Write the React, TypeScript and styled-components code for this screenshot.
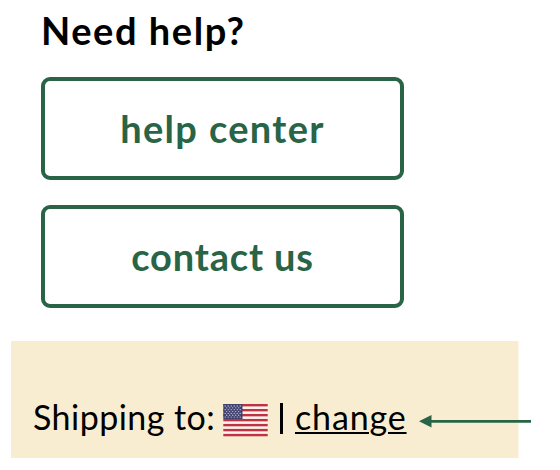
import React from "react";
import styled, { createGlobalStyle } from "styled-components";

const GREEN = "#2a6446";

const GlobalStyle = createGlobalStyle`
  * { box-sizing: border-box; }
  body { margin: 0; background: #fff; color: #000; font-family: Lato, "Liberation Sans", sans-serif; }
`;

const Page = styled.main`
  width: 560px;
  height: 470px;
  overflow: hidden;
`;

const HelpSection = styled.section`
  width: 404px;
  height: 341px;
  padding: 6px 0 0 41px;
  display: flex;
  flex-direction: column;
`;

const Heading = styled.h1`
  margin: 0 0 23px;
  height: 48px;
  font-size: 38px;
  line-height: 48px;
  font-weight: 700;
  letter-spacing: 1.55px;
  white-space: nowrap;
`;

const HelpButton = styled.button<{ $tracking: number }>`
  width: 363px;
  height: 103px;
  flex: none;
  margin: 0 0 25px;
  padding: 0 0 1px;
  border: 4px solid ${GREEN};
  border-radius: 9px;
  background: #fff;
  color: ${GREEN};
  font: 700 38px/48px Lato, "Liberation Sans", sans-serif;
  letter-spacing: ${(p) => p.$tracking}px;
`;

const ShippingBar = styled.section`
  width: 549px;
  height: 117px;
  margin-left: 11px;
  padding: 53px 0 0 22px;
  background: linear-gradient(#f8edd0, #f8edd0) 0 0 / 507.5px 100% no-repeat;
  display: flex;
  align-items: flex-start;
  font-size: 34px;
  line-height: 46px;
  white-space: nowrap;
`;

const Label = styled.span`
  width: 190px;
  letter-spacing: 0.45px;
`;

const Flag = styled.svg`
  width: 45px;
  height: 33px;
  margin-top: 10px;
  flex: none;
`;

const Separator = styled.span`
  width: 3px;
  height: 31px;
  margin: 9px 0 0 12px;
  background: #000;
`;

const ChangeLink = styled.a`
  width: 111px;
  margin-left: 12px;
  color: #000;
  letter-spacing: 0.85px;
  text-decoration: underline;
  text-decoration-thickness: 2px;
  text-underline-offset: 2px;
`;

const Arrow = styled.svg`
  width: 112px;
  height: 14px;
  margin: 21px 0 0 13px;
  flex: none;
`;

const stripes = Array.from({ length: 7 }, (_, i) => i * 4.98);
const stars = Array.from({ length: 7 }, (_, row) =>
  Array.from({ length: row % 2 ? 5 : 6 }, (_, col) => ({
    x: 2.2 + col * 3 + (row % 2 ? 1.5 : 0),
    y: 2 + row * 1.85,
  }))
).flat();

function UsFlag() {
  return (
    <Flag viewBox="0 0 45 33" role="img" aria-label="United States">
      <rect x="0.3" y="0" width="44.4" height="32.3" fill="#fbf3ee" />
      {stripes.map((y) => (
        <rect key={y} x="0.3" y={y} width="44.4" height="2.4" fill="#bd3342" />
      ))}
      <rect x="0.3" y="0" width="19.2" height="15" fill="#41426f" />
      {stars.map((s, i) => (
        <circle key={i} cx={s.x} cy={s.y} r="0.65" fill="#c9c8da" />
      ))}
    </Flag>
  );
}

export default function App() {
  return (
    <>
      <GlobalStyle />
      <Page>
        <HelpSection>
          <Heading>Need help?</Heading>
          <HelpButton $tracking={1.35}>help center</HelpButton>
          <HelpButton $tracking={0.85}>contact us</HelpButton>
        </HelpSection>
        <ShippingBar>
          <Label>Shipping to:</Label>
          <UsFlag />
          <Separator />
          <ChangeLink href="#">change</ChangeLink>
          <Arrow viewBox="0 0 112 14" aria-hidden="true">
            <path d="M0 6.3 12.5 0v12.6z" fill={GREEN} />
            <path d="M12 6.3h100" stroke={GREEN} strokeWidth="2.8" />
          </Arrow>
        </ShippingBar>
      </Page>
    </>
  );
}
